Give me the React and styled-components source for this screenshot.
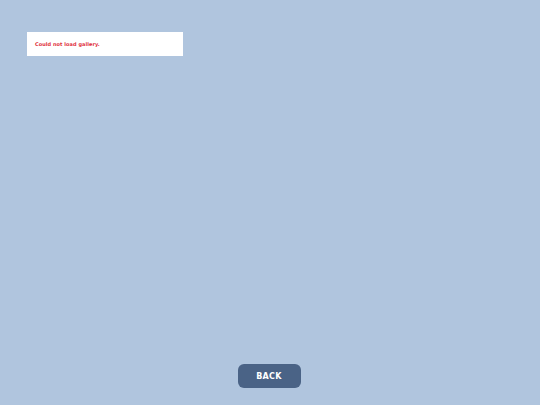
import React from 'react';
import styled, { createGlobalStyle } from 'styled-components';

const GlobalStyle = createGlobalStyle`
  html, body {
    margin: 0;
    padding: 0;
    background: #b0c5de;
  }
  #root {
    height: 405px;
  }
`;

const App = () => {
  return (
    <>
      <GlobalStyle />
      <Page>
        <Content>
          <ErrorBox>
            <ErrorText>Could not load gallery.</ErrorText>
          </ErrorBox>
        </Content>
        <Footer>
          <BackButton>BACK</BackButton>
        </Footer>
      </Page>
    </>
  );
};

export default App;

const Page = styled.div`
  display: flex;
  flex-direction: column;
  height: 405px;
  width: 540px;
  box-sizing: border-box;
  padding: 32px 27px 17px;
  font-family: "DejaVu Sans", sans-serif;
`;

const Content = styled.div`
  flex: 1;
`;

const ErrorBox = styled.div`
  width: 156px;
  height: 24px;
  background: #ffffff;
  display: flex;
  align-items: center;
  padding: 0 8px;
  box-sizing: border-box;
`;

const ErrorText = styled.span`
  color: #e0303c;
  font-size: 5px;
  font-weight: bold;
  letter-spacing: 0.05px;
`;

const Footer = styled.div`
  display: flex;
  justify-content: center;
`;

const BackButton = styled.button`
  width: 63px;
  height: 24px;
  border: none;
  border-radius: 6px;
  background: #4a6386;
  color: #ffffff;
  font-family: "DejaVu Sans", sans-serif;
  font-size: 8px;
  font-weight: bold;
  letter-spacing: 0.3px;
  padding: 0;
  margin-left: -2px;
`;
